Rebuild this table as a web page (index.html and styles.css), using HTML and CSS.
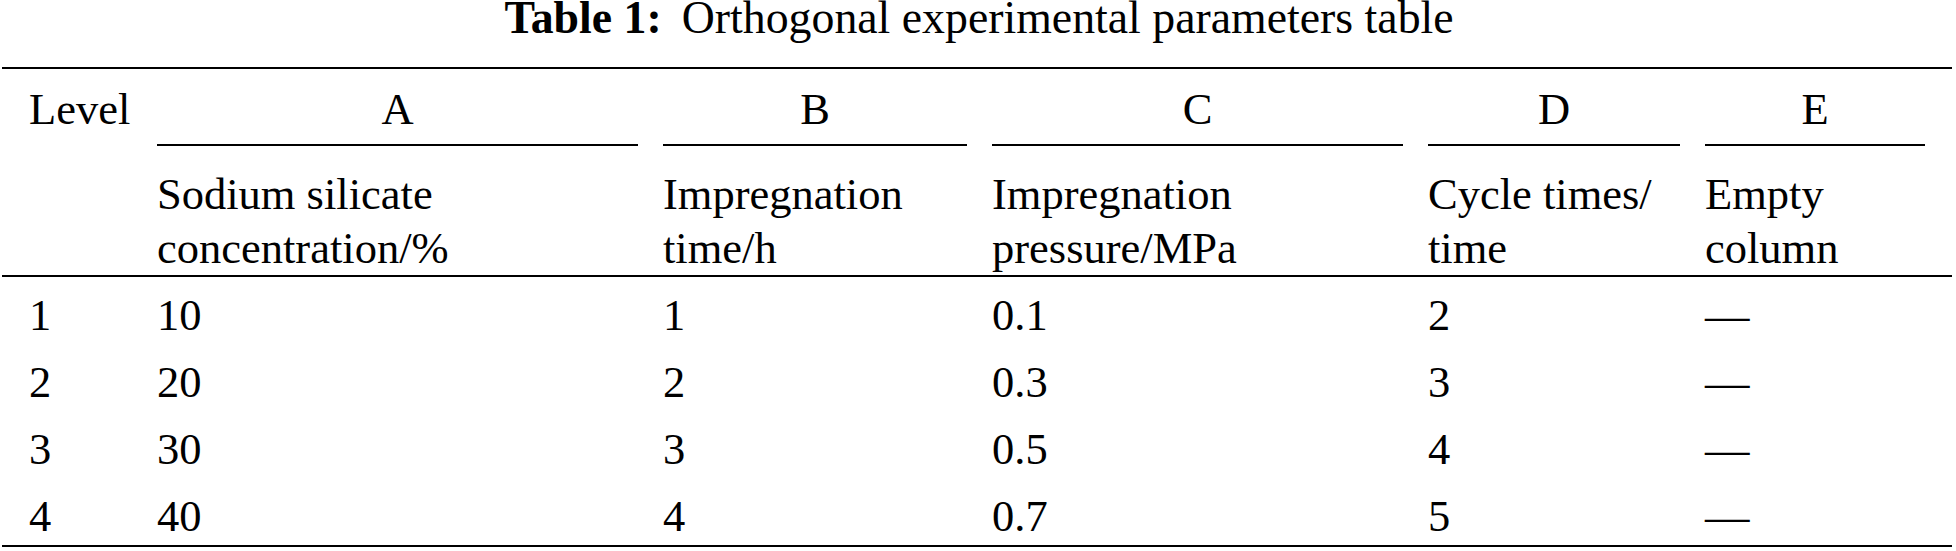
FILE: index.html
```html
<!DOCTYPE html>
<html lang="en">
<head>
<meta charset="utf-8">
<title>Table 1: Orthogonal experimental parameters table</title>
<link rel="stylesheet" href="styles.css">
</head>
<body>
<div class="sheet">
  <h1 class="caption"><span class="caption-label">Table 1:</span>Orthogonal experimental parameters table</h1>
  <table class="params">
    <colgroup>
      <col class="c-level">
      <col class="c-a">
      <col class="c-b">
      <col class="c-c">
      <col class="c-d">
      <col class="c-e">
    </colgroup>
    <thead>
      <tr class="group-row">
        <th class="first level" rowspan="2">Level</th>
        <th><div class="factor">A</div></th>
        <th><div class="factor">B</div></th>
        <th><div class="factor">C</div></th>
        <th><div class="factor">D</div></th>
        <th class="last"><div class="factor">E</div></th>
      </tr>
      <tr class="name-row">
        <th>Sodium silicate<br>concentration/%</th>
        <th>Impregnation<br>time/h</th>
        <th>Impregnation<br>pressure/MPa</th>
        <th>Cycle times/<br>time</th>
        <th class="last">Empty<br>column</th>
      </tr>
    </thead>
    <tbody>
      <tr><td class="first">1</td><td>10</td><td>1</td><td>0.1</td><td>2</td><td class="last">—</td></tr>
      <tr><td class="first">2</td><td>20</td><td>2</td><td>0.3</td><td>3</td><td class="last">—</td></tr>
      <tr><td class="first">3</td><td>30</td><td>3</td><td>0.5</td><td>4</td><td class="last">—</td></tr>
      <tr><td class="first">4</td><td>40</td><td>4</td><td>0.7</td><td>5</td><td class="last">—</td></tr>
    </tbody>
  </table>
</div>
</body>
</html>
```
FILE: styles.css
```css
html, body {
  margin: 0;
  background: #fff;
}

body {
  padding: 0 0 0 2px;
  font-family: "Liberation Serif", "Times New Roman", serif;
  font-size: 44.5px;
  color: #000;
}

.sheet {
  width: 1950px;
}

.caption {
  margin: 0 0 31px;
  padding-left: 4px;
  font-size: 45.8px;
  font-weight: normal;
  line-height: 36px;
  text-align: center;
}

.caption-label {
  font-weight: bold;
  margin-right: 20px;
}

.params {
  width: 1950px;
  table-layout: fixed;
  border-collapse: separate;
  border-spacing: 0;
  border-top: 2px solid #000;
  border-bottom: 2px solid #000;
}

.c-level { width: 155px; }
.c-a { width: 506px; }
.c-b { width: 329px; }
.c-c { width: 436px; }
.c-d { width: 277px; }
.c-e { width: 247px; }

.params th,
.params td {
  padding: 0 25px 0 0;
  text-align: left;
  font-weight: normal;
  line-height: 54px;
  vertical-align: top;
  white-space: nowrap;
}

.group-row th {
  padding-top: 13px;
}

.factor {
  text-align: center;
  padding-bottom: 8px;
  border-bottom: 2px solid #000;
}

.name-row th {
  padding-top: 21px;
  border-bottom: 2px solid #000;
}

.params .level {
  border-bottom: 2px solid #000;
}

.params td {
  padding-top: 11px;
  padding-bottom: 2px;
}

.params .first {
  padding-left: 27px;
}

.params .last {
  padding-right: 27px;
}
```
